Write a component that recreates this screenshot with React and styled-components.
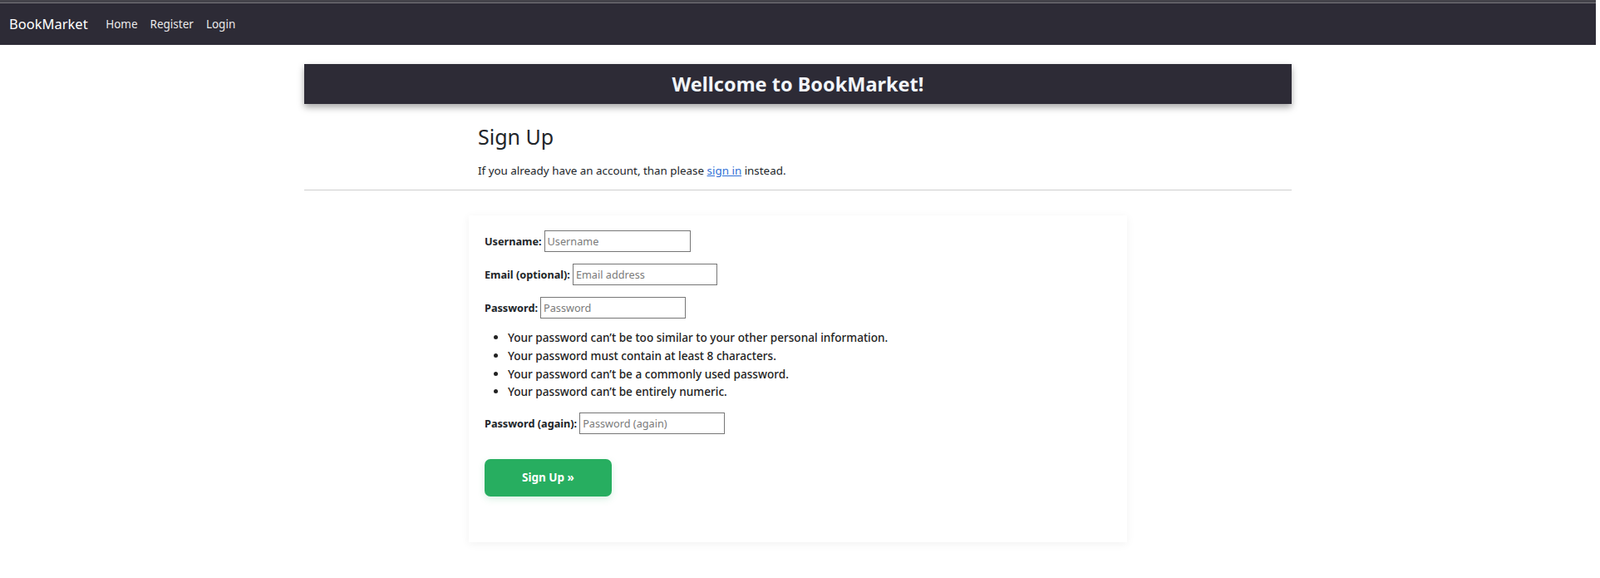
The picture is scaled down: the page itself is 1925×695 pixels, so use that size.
import React from 'react';
import styled, { createGlobalStyle } from 'styled-components';

const GlobalStyle = createGlobalStyle`
  body {
    margin: 0;
    background: #ffffff;
    font-family: "Noto Sans", "Open Sans", sans-serif;
    color: #212529;
  }
`;

const fields = [
  { id: 'username', label: 'Username:', type: 'text', placeholder: 'Username', width: 176 },
  { id: 'email', label: 'Email (optional):', type: 'email', placeholder: 'Email address', width: 174 },
  { id: 'password1', label: 'Password:', type: 'password', placeholder: 'Password', width: 175 },
];

const rules = [
  'Your password can’t be too similar to your other personal information.',
  'Your password must contain at least 8 characters.',
  'Your password can’t be a commonly used password.',
  'Your password can’t be entirely numeric.',
];

const Field = ({ id, label, type, placeholder, width }) => (
  <FieldRow>
    <Label htmlFor={id}>{label}</Label>
    <Input id={id} type={type} placeholder={placeholder} $width={width} />
  </FieldRow>
);

export default function App() {
  return (
    <Page>
      <GlobalStyle />
      <Navbar>
        <Brand href="#">BookMarket</Brand>
        <NavLinks>
          <NavLink href="#">Home</NavLink>
          <NavLink href="#">Register</NavLink>
          <NavLink href="#">Login</NavLink>
        </NavLinks>
      </Navbar>

      <Container>
        <Banner>
          <BannerTitle>Wellcome to BookMarket!</BannerTitle>
        </Banner>

        <Column>
          <Heading>Sign Up</Heading>
          <Intro>
            If you already have an account, than please <TextLink href="#">sign in</TextLink> instead.
          </Intro>
        </Column>

        <Divider />

        <Card>
          <form onSubmit={(e) => e.preventDefault()}>
            {fields.map((f) => (
              <Field key={f.id} {...f} />
            ))}
            <HelpList>
              {rules.map((r) => (
                <li key={r}>{r}</li>
              ))}
            </HelpList>
            <Field id="password2" label="Password (again):" type="password" placeholder="Password (again)" width={175} />
            <SubmitButton type="submit">Sign Up »</SubmitButton>
          </form>
        </Card>
      </Container>
    </Page>
  );
}

const Page = styled.div`
  width: 1920px;
  min-height: 695px;
`;

const Navbar = styled.nav`
  display: flex;
  align-items: center;
  height: 51px;
  padding: 0 11px;
  background: #2d2b36;
  border-top: 3px solid #45444b;
  box-shadow: inset 0 1px 0 #77767c;
`;

const Brand = styled.a`
  font-size: 16.5px;
  color: #ffffff;
  text-decoration: none;
  margin-right: 14px;
`;

const NavLinks = styled.div`
  display: flex;
  align-items: center;
`;

const NavLink = styled.a`
  padding: 0 7.5px;
  font-size: 13.5px;
  color: rgba(255, 255, 255, 0.92);
  text-decoration: none;
`;

const Container = styled.main`
  width: 1188px;
  margin: 0 auto;
  padding-top: 23px;
`;

const Banner = styled.header`
  display: flex;
  align-items: center;
  justify-content: center;
  height: 48px;
  background: #2d2b36;
  box-shadow: 0 4px 8px rgba(0, 0, 0, 0.35);
`;

const BannerTitle = styled.h1`
  margin: 0;
  font-size: 23.5px;
  font-weight: 700;
  color: #f2f6fb;
`;

const Column = styled.section`
  width: 792px;
  margin-left: 198px;
  padding: 0 11px;
  box-sizing: border-box;
`;

const Heading = styled.h2`
  margin: 24px 0 0;
  font-size: 25px;
  font-weight: 400;
  line-height: 1.2;
`;

const Intro = styled.p`
  margin: 16px 0 0;
  font-size: 13.4px;
  line-height: 1.5;
`;

const TextLink = styled.a`
  color: #2f6fd6;
  text-decoration: underline;
`;

const Divider = styled.hr`
  margin: 13px 0 0;
  border: 0;
  border-top: 1.5px solid #cfcfcf;
`;

const Card = styled.div`
  width: 792px;
  margin: 30px 0 0 198px;
  padding: 18px 19px 55px;
  box-sizing: border-box;
  background: #ffffff;
  box-shadow: 0 2px 10px rgba(0, 0, 0, 0.06);
`;

const FieldRow = styled.div`
  display: flex;
  align-items: center;
  height: 26px;
  margin-bottom: 14px;
`;

const Label = styled.label`
  font-size: 12.7px;
  font-weight: 700;
  margin-right: 3px;
`;

const Input = styled.input`
  width: ${(p) => p.$width}px;
  height: 26px;
  box-sizing: border-box;
  padding: 0 3px;
  border: 1px solid #767676;
  font-family: inherit;
  font-size: 12.7px;
  color: #212529;

  &::placeholder {
    color: #7a7a7a;
  }
`;

const HelpList = styled.ul`
  margin: -2px 0 14px;
  padding-left: 28px;
  font-size: 13.6px;
  font-weight: 500;
  line-height: 21.7px;
  color: #222;
`;

const SubmitButton = styled.button`
  display: block;
  width: 153px;
  height: 45px;
  margin-top: 30px;
  border: 0;
  border-radius: 7px;
  background: #27ae60;
  box-shadow: 0 3px 8px rgba(39, 174, 96, 0.18);
  font-family: inherit;
  font-size: 13.5px;
  font-weight: 700;
  color: #ffffff;
  cursor: pointer;
`;
